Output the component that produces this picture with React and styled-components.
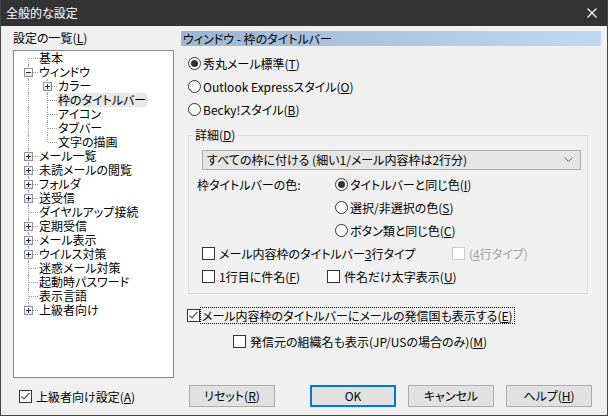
import React from "react";
import styled, { createGlobalStyle } from "styled-components";

const GlobalStyle = createGlobalStyle`
  html, body { margin: 0; padding: 0; background: #f0f0f0; }
  body {
    font-family: "Noto Sans CJK JP", "Noto Sans", sans-serif;
    font-size: 12px;
    color: #000;
  }
  * { box-sizing: border-box; }
`;

const Window = styled.div`
  width: 608px;
  height: 416px;
  display: flex;
  flex-direction: column;
  background: #f0f0f0;
  border: 1px solid #454545;
  border-top: none;
  font-feature-settings: "palt";
  overflow: hidden;
`;

const TitleBar = styled.div`
  height: 26px;
  flex: none;
  background: #333333;
  color: #ffffff;
  display: flex;
  align-items: center;
  justify-content: space-between;
  padding: 0 10px 0 5px;
  line-height: 16px;
`;

const Body = styled.div`
  flex: 1;
  display: grid;
  grid-template-columns: 161px 420px;
  grid-template-rows: 348px 1fr;
  column-gap: 7px;
  padding: 4px 0 0 12px;
`;

const LeftCol = styled.div`
  display: flex;
  flex-direction: column;
`;

const Caption = styled.div`
  height: 16px;
  line-height: 16px;
`;

const TreeBox = styled.div`
  margin-top: 4px;
  height: 328px;
  background: #ffffff;
  border: 1px solid #828790;
  padding-left: 5px;
`;

const TreeRow = styled.div`
  display: flex;
  height: 14px;
  line-height: 14px;
  white-space: nowrap;
`;

const Indent = styled.div`
  width: 19px;
  height: 14px;
  flex: none;
  border-left: ${(p) => (p.$line ? "1px dotted #a0a0a0" : "none")};
  margin-left: 9px;
  margin-right: -9px;
`;

const Connector = styled.div`
  position: relative;
  width: 19px;
  height: 14px;
  flex: none;

  &::before {
    content: "";
    position: absolute;
    left: 9px;
    top: ${(p) => (p.$first ? 7 : 0)}px;
    bottom: ${(p) => (p.$last ? 7 : 0)}px;
    border-left: 1px dotted #a0a0a0;
  }

  &::after {
    content: "";
    position: absolute;
    left: 10px;
    top: 7px;
    width: 9px;
    border-top: 1px dotted #a0a0a0;
  }
`;

const Expander = styled.div`
  position: absolute;
  left: 5px;
  top: 3px;
  width: 9px;
  height: 9px;
  border: 1px solid #919191;
  background: linear-gradient(#ffffff, #e4e4e4);
  z-index: 1;
  display: flex;
  align-items: center;
  justify-content: center;
`;

const TreeLabel = styled.span`
  padding: 0 1px;
  margin-left: 0;
  background: ${(p) => (p.$selected ? "#e8e8e8" : "transparent")};
`;

const RightCol = styled.div`
  display: flex;
  flex-direction: column;
`;

const Header = styled.div`
  margin-top: 1px;
  height: 15px;
  line-height: 15px;
  padding-left: 2px;
  background: linear-gradient(to right, #9db5d2, #c0d8f1);
`;

const RadioList = styled.div`
  margin-top: 6px;
  display: flex;
  flex-direction: column;
`;

const OptionRow = styled.div`
  display: flex;
  align-items: center;
  height: 23px;
  padding-left: ${(p) => p.$indent || 0}px;
  margin-top: ${(p) => p.$top || 0}px;
  white-space: nowrap;
`;

const Opt = styled.label`
  display: flex;
  align-items: center;
  width: ${(p) => (p.$w ? `${p.$w}px` : "auto")};
  color: ${(p) => (p.$disabled ? "#a0a0a0" : "#000")};
  line-height: 15px;
`;

const RadioCircle = styled.span`
  width: 13px;
  height: 13px;
  border: 1px solid #333333;
  border-radius: 50%;
  background: #ffffff;
  display: inline-flex;
  align-items: center;
  justify-content: center;
  margin-right: 2px;
  flex: none;

  &::after {
    content: "";
    width: 7px;
    height: 7px;
    border-radius: 50%;
    background: ${(p) => (p.$checked ? "#333333" : "transparent")};
  }
`;

const CheckBox = styled.span`
  width: 13px;
  height: 13px;
  border: 1px solid ${(p) => (p.$disabled ? "#cccccc" : "#333333")};
  background: #ffffff;
  display: inline-flex;
  align-items: center;
  justify-content: center;
  margin-right: ${(p) => (p.$focus ? 1 : 4)}px;
  flex: none;
`;

const Focus = styled.span`
  outline: 1px dotted #000;
  outline-offset: 0;
  padding: 0 1px;
`;

const Group = styled.fieldset`
  margin: 6px 0 0 7px;
  width: 400px;
  padding: 0;
  border: 1px solid #dcdcdc;
  min-width: 0;
`;

const Legend = styled.legend`
  margin-left: 4px;
  padding: 0 2px;
  line-height: 16px;
  height: 16px;
`;

const GroupInner = styled.div`
  padding: 7px 6px 5px 0;
`;

const Combo = styled.div`
  margin-left: 13px;
  height: 20px;
  border: 1px solid #adadad;
  background: #e5e5e5;
  display: flex;
  align-items: center;
  justify-content: space-between;
  padding: 0 7px 0 4px;
  line-height: 16px;
`;

const ColorGrid = styled.div`
  margin-top: 3px;
  padding-left: 8px;
  display: grid;
  grid-template-columns: 138px 1fr;
  grid-auto-rows: 23px;
  align-items: center;
`;

const ColorLabel = styled.div`
  line-height: 15px;
`;

const BottomLeft = styled.div`
  padding: 11px 0 0 6px;
`;

const ButtonRow = styled.div`
  display: flex;
  padding: 7px 0 0 8px;
`;

const Button = styled.button`
  width: 86px;
  height: 22px;
  margin-left: ${(p) => p.$gap || 0}px;
  background: #e1e1e1;
  border: ${(p) => (p.$default ? "2px solid #0078d7" : "1px solid #adadad")};
  font-family: inherit;
  font-size: 12px;
  font-feature-settings: "palt";
  color: #000;
  padding: 0;
  line-height: 16px;
`;

const Check = () => (
  <svg width="11" height="11" viewBox="0 0 11 11">
    <polyline points="1.5,5.5 4,8 9.5,2" fill="none" stroke="#555" strokeWidth="1.2" />
  </svg>
);

const Radio = ({ checked, children }) => (
  <Opt>
    <RadioCircle $checked={checked} />
    <span>{children}</span>
  </Opt>
);

const CheckOpt = ({ checked, disabled, focus, w, children }) => (
  <Opt $w={w} $disabled={disabled}>
    <CheckBox $disabled={disabled} $focus={focus}>{checked && <Check />}</CheckBox>
    {focus ? <Focus>{children}</Focus> : <span>{children}</span>}
  </Opt>
);

const tree = [
  { label: "基本", level: 0, first: true },
  { label: "ウィンドウ", level: 0, toggle: "minus" },
  { label: "カラー", level: 1, toggle: "plus" },
  { label: "枠のタイトルバー", level: 1, selected: true },
  { label: "アイコン", level: 1 },
  { label: "タブバー", level: 1 },
  { label: "文字の描画", level: 1, last: true },
  { label: "メール一覧", level: 0, toggle: "plus" },
  { label: "未読メールの閲覧", level: 0, toggle: "plus" },
  { label: "フォルダ", level: 0, toggle: "plus" },
  { label: "送受信", level: 0, toggle: "plus" },
  { label: "ダイヤルアップ接続", level: 0 },
  { label: "定期受信", level: 0, toggle: "plus" },
  { label: "メール表示", level: 0, toggle: "plus" },
  { label: "ウイルス対策", level: 0, toggle: "plus" },
  { label: "迷惑メール対策", level: 0 },
  { label: "起動時パスワード", level: 0 },
  { label: "表示言語", level: 0 },
  { label: "上級者向け", level: 0, toggle: "plus", last: true },
];

const Sign = ({ type }) => (
  <svg width="7" height="7" viewBox="0 0 7 7">
    <line x1="1" y1="3.5" x2="6" y2="3.5" stroke="#1f2f4f" strokeWidth="1" />
    {type === "plus" && <line x1="3.5" y1="1" x2="3.5" y2="6" stroke="#1f2f4f" strokeWidth="1" />}
  </svg>
);

const App = () => (
  <>
    <GlobalStyle />
    <Window>
      <TitleBar>
        <span>全般的な設定</span>
        <svg width="10" height="10" viewBox="0 0 10 10">
          <path d="M0.5 0.5 L9.5 9.5 M9.5 0.5 L0.5 9.5" stroke="#fff" strokeWidth="1.1" />
        </svg>
      </TitleBar>
      <Body>
        <LeftCol>
          <Caption>設定の一覧(<u>L</u>)</Caption>
          <TreeBox>
            {tree.map((item) => (
              <TreeRow key={item.label}>
                {item.level === 1 && <Indent $line />}
                <Connector $first={item.first} $last={item.last}>
                  {item.toggle && (
                    <Expander>
                      <Sign type={item.toggle} />
                    </Expander>
                  )}
                </Connector>
                <TreeLabel $selected={item.selected}>{item.label}</TreeLabel>
              </TreeRow>
            ))}
          </TreeBox>
        </LeftCol>

        <RightCol>
          <Header>ウィンドウ - 枠のタイトルバー</Header>
          <RadioList>
            <OptionRow $indent={7}>
              <Radio checked>秀丸メール標準(<u>T</u>)</Radio>
            </OptionRow>
            <OptionRow $indent={7}>
              <Radio>Outlook Expressスタイル(<u>O</u>)</Radio>
            </OptionRow>
            <OptionRow $indent={7}>
              <Radio>Becky!スタイル(<u>B</u>)</Radio>
            </OptionRow>
          </RadioList>

          <Group>
            <Legend>詳細(<u>D</u>)</Legend>
            <GroupInner>
              <Combo>
                <span>すべての枠に付ける (細い1/メール内容枠は2行分)</span>
                <svg width="9" height="6" viewBox="0 0 9 6">
                  <polyline points="0.5,0.5 4.5,4.5 8.5,0.5" fill="none" stroke="#606060" strokeWidth="1" />
                </svg>
              </Combo>
              <ColorGrid>
                <ColorLabel>枠タイトルバーの色:</ColorLabel>
                <Radio checked>タイトルバーと同じ色(<u>I</u>)</Radio>
                <span />
                <Radio>選択/非選択の色(<u>S</u>)</Radio>
                <span />
                <Radio>ボタン類と同じ色(<u>C</u>)</Radio>
              </ColorGrid>
              <OptionRow $indent={13}>
                <CheckOpt w={250}>メール内容枠のタイトルバー<u>3</u>行タイプ</CheckOpt>
                <CheckOpt disabled>(<u>4</u>行タイプ)</CheckOpt>
              </OptionRow>
              <OptionRow $indent={13}>
                <CheckOpt w={125}>1行目に件名(<u>F</u>)</CheckOpt>
                <CheckOpt>件名だけ太字表示(<u>U</u>)</CheckOpt>
              </OptionRow>
            </GroupInner>
          </Group>

          <OptionRow $indent={6} $top={10}>
            <CheckOpt checked focus>
              メール内容枠のタイトルバーにメールの発信国も表示する(<u>E</u>)
            </CheckOpt>
          </OptionRow>
          <OptionRow $indent={52} $top={3}>
            <CheckOpt>発信元の組織名も表示(JP/USの場合のみ)(<u>M</u>)</CheckOpt>
          </OptionRow>
        </RightCol>

        <BottomLeft>
          <CheckOpt checked>上級者向け設定(<u>A</u>)</CheckOpt>
        </BottomLeft>
        <ButtonRow>
          <Button>リセット(<u>R</u>)</Button>
          <Button $default $gap={35}>OK</Button>
          <Button $gap={12}>キャンセル</Button>
          <Button $gap={12}>ヘルプ(<u>H</u>)</Button>
        </ButtonRow>
      </Body>
    </Window>
  </>
);

export default App;
